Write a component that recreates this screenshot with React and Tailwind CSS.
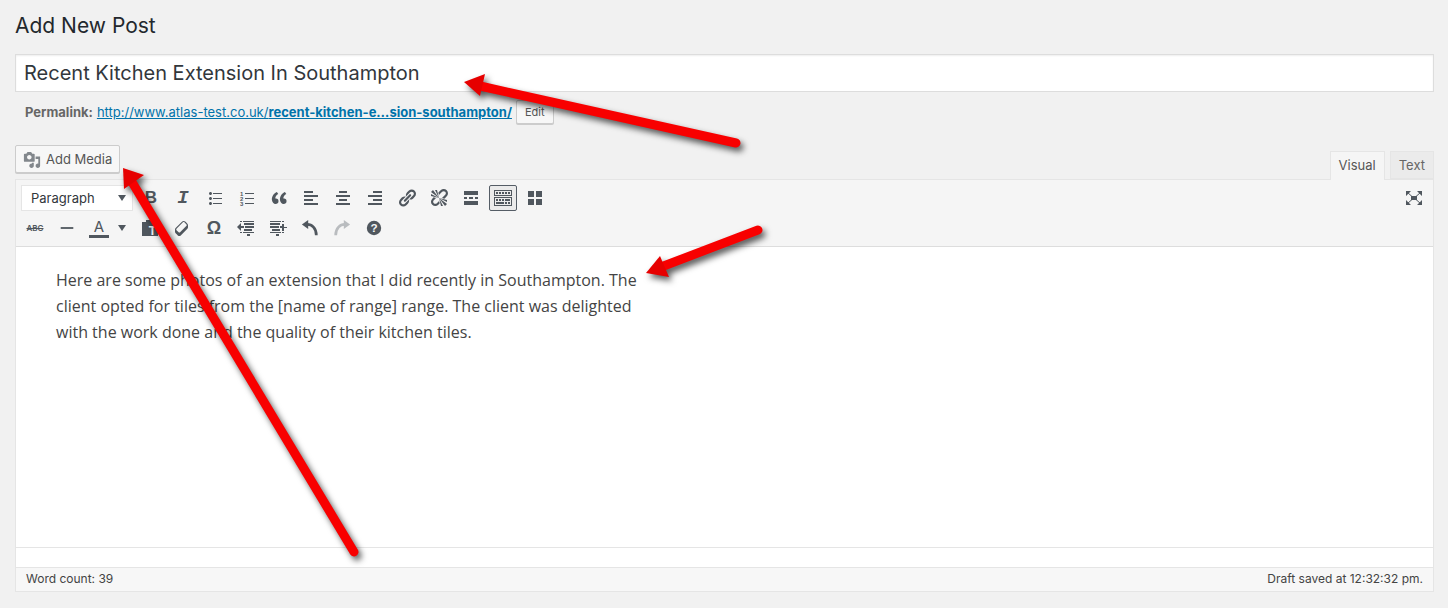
import React from "react";

const ICONS = {
  media: "M13 11V4c0-.55-.45-1-1-1h-1.67L9 1H5L3.67 3H2c-.55 0-1 .45-1 1v7c0 .55.45 1 1 1h10c.55 0 1-.45 1-1zM7 4.5c1.38 0 2.5 1.12 2.5 2.5S8.38 9.5 7 9.5 4.5 8.38 4.5 7 5.62 4.5 7 4.5zM14 6h5v10.5c0 1.38-1.12 2.5-2.5 2.5S14 17.88 14 16.5s1.12-2.5 2.5-2.5c.17 0 .34.02.5.05V9h-3V6zm-4 8.05V13h2v3.5c0 1.38-1.12 2.5-2.5 2.5S7 17.88 7 16.5 8.12 14 9.5 14c.17 0 .34.02.5.05z",
  bullets: "M5.5 7C4.67 7 4 6.33 4 5.5 4 4.68 4.67 4 5.5 4 6.32 4 7 4.68 7 5.5 7 6.33 6.32 7 5.5 7zM8 5h9v1H8V5zm-2.5 7c-.83 0-1.5-.67-1.5-1.5C4 9.68 4.67 9 5.5 9c.82 0 1.5.68 1.5 1.5 0 .83-.68 1.5-1.5 1.5zM8 10h9v1H8v-1zm-2.5 7c-.83 0-1.5-.67-1.5-1.5 0-.82.67-1.5 1.5-1.5.82 0 1.5.68 1.5 1.5 0 .83-.68 1.5-1.5 1.5zM8 15h9v1H8v-1z",
  quote: "M9.49 13.22c0-.74-.2-1.38-.61-1.9-.62-.78-1.83-.88-2.53-.72-.29-1.65 1.11-3.75 2.92-4.65L7.88 4c-2.73 1.3-5.42 4.28-4.96 8.05C3.21 14.43 4.59 16 6.54 16c.85 0 1.56-.25 2.12-.75s.83-1.18.83-2.03zm8.05 0c0-.74-.2-1.38-.61-1.9-.63-.78-1.83-.88-2.53-.72-.29-1.65 1.11-3.75 2.92-4.65L15.93 4c-2.73 1.3-5.41 4.28-4.95 8.05.29 2.38 1.66 3.95 3.61 3.95.85 0 1.56-.25 2.12-.75s.83-1.18.83-2.03z",
  left: "M12 5V3H3v2h9zm5 4V7H3v2h14zm-5 4v-2H3v2h9zm5 4v-2H3v2h14z",
  center: "M14 5V3H6v2h8zm3 4V7H3v2h14zm-3 4v-2H6v2h8zm3 4v-2H3v2h14z",
  right: "M17 5V3H8v2h9zm0 4V7H3v2h14zm0 4v-2H8v2h9zm0 4v-2H3v2h14z",
  link: "M17.74 2.76c1.68 1.69 1.68 4.41 0 6.1l-1.53 1.52c-1.12 1.12-2.7 1.47-4.14 1.09l2.62-2.61.76-.77.76-.76c.84-.84.84-2.2 0-3.04-.84-.85-2.2-.85-3.04 0l-.77.76-3.38 3.38c-.37-1.44-.02-3.02 1.1-4.14l1.52-1.53c1.69-1.68 4.42-1.68 6.1 0zM8.59 13.43l5.34-5.34c.42-.42.42-1.1 0-1.52-.44-.43-1.13-.39-1.53 0l-5.33 5.34c-.42.42-.42 1.1 0 1.52.44.43 1.13.39 1.52 0zm-.76 2.29l4.14-4.15c.38 1.44.03 3.02-1.09 4.14l-1.52 1.53c-1.69 1.68-4.41 1.68-6.1 0-1.68-1.68-1.68-4.42 0-6.1l1.53-1.52c1.12-1.12 2.7-1.47 4.14-1.1l-4.14 4.15c-.85.84-.85 2.2 0 3.05.84.84 2.2.84 3.04 0z",
  unlink: "M17.74 2.26c1.68 1.69 1.68 4.41 0 6.1l-1.53 1.52c-.32.33-.69.58-1.08.77L13 10l1.69-1.64.76-.77.76-.76c.84-.84.84-2.2 0-3.04-.84-.85-2.2-.85-3.04 0l-.77.76-.76.76L10 7l-.65-2.14c.19-.38.44-.75.77-1.07l1.52-1.53c1.69-1.68 4.42-1.68 6.1 0zM2 4l8 6-6-8zm4-2l4 8-2-8H6zM2 6l8 4-8-2V6zm7.36 7.69L10 13l.74 2.35-1.38 1.39c-1.69 1.68-4.41 1.68-6.1 0-1.68-1.68-1.68-4.42 0-6.1l1.39-1.38L7 10l-.69.64-1.52 1.53c-.85.84-.85 2.2 0 3.04.84.85 2.2.85 3.04 0zM18 16l-8-6 6 8zm-4 2l-4-8 2 8h2zm4-4l-8-4 8 2v2z",
  more: "M17 7V3H3v4h14zM6 11V9H3v2h3zm6 0V9H8v2h4zm5 0V9h-3v2h3zm0 6v-4H3v4h14z",
  toggle: "M19 2v6H1V2h18zm-1 5V3H2v4h16zM5 4v2H3V4h2zm3 0v2H6V4h2zm3 0v2H9V4h2zm3 0v2h-2V4h2zm3 0v2h-2V4h2zm2 5v9H1V9h18zm-1 8v-7H2v7h16zM5 11v2H3v-2h2zm3 0v2H6v-2h2zm3 0v2H9v-2h2zm6 0v2h-5v-2h5zm-6 3v2H3v-2h8zm3 0v2h-2v-2h2zm3 0v2h-2v-2h2z",
  grid: "M3 3h6v6H3zM11 3h6v6h-6zM3 11h6v6H3zM11 11h6v6h-6z",
  hr: "M3 9h14v2H3z",
  eraser: "M14.29 4.59l1.1 1.11c.41.4.61.94.61 1.47v2.12c0 .53-.2 1.07-.61 1.47l-6.63 6.63c-.4.41-.94.61-1.47.61s-1.07-.2-1.47-.61l-1.11-1.1-1.1-1.11c-.41-.4-.61-.94-.61-1.47v-2.12c0-.54.2-1.07.61-1.48l6.63-6.62c.4-.41.94-.61 1.47-.61s1.06.2 1.47.61zm-6.21 9.7l6.42-6.42c.39-.39.39-1.03 0-1.43L12.36 4.3c-.19-.19-.45-.29-.72-.29s-.52.1-.71.29l-6.42 6.42c-.39.4-.39 1.04 0 1.43l2.14 2.14c.38.38 1.04.38 1.43 0z",
  outdent: "M4 3h2v1H4zM7 3h11v1H7zM8 5h10v2H8zM9 8h9v2H9zM8 11h8v2H8zM4 14h2v1H4zM7 14h11v1H7zM11 16h3v2h-3zM1 9l4-4v3h3v2H5v3z",
  indent: "M2 3h11v1H2zM14 3h2v1h-2zM2 5h10v2H2zM2 8h9v2H2zM4 11h8v2H4zM2 14h11v1H2zM14 14h2v1h-2zM8 16h3v2H8zM19 9h-3V6h-2v2h-2v2h2v3h2v-3h3z",
};

function Icon({ name, size = "size-5", children }) {
  return (
    <svg viewBox="0 0 20 20" className={`${size} shrink-0 fill-current`} aria-hidden="true">
      {name && <path d={ICONS[name]} />}
      {children}
    </svg>
  );
}

function Tool({ label, children, className = "text-[#50575e]", active }) {
  return (
    <button
      type="button"
      aria-label={label}
      title={label}
      aria-pressed={active}
      className={`flex h-[26px] w-7 items-center justify-center rounded-xs ${active ? "border border-[#555d66] bg-[#ebebeb]" : ""} ${className}`}
    >
      {children}
    </button>
  );
}

function Caret() {
  return (
    <svg viewBox="0 0 8 6" className="h-[6px] w-2 fill-[#50575e]" aria-hidden="true">
      <path d="M0 0h8L4 6z" />
    </svg>
  );
}

function Curve() {
  return (
    <>
      <path d="M1 6 8 1v10z" />
      <path d="M7 6c5 0 10 4 10 12" fill="none" stroke="currentColor" strokeWidth="3" />
    </>
  );
}

function FullScreen() {
  return (
    <svg viewBox="0 0 16 14" className="h-[14px] w-4 shrink-0 fill-current" aria-hidden="true">
      <path d="M0 0h5L0 5zM16 0h-5l5 5zM0 14h5l-5-5zM16 14h-5l5-5zM5 5h6v4H5z" />
      <path d="M1 1l5 4.500M15 1l-5 4.500M1 13l5-4.500M15 13l-5-4.500" fill="none" stroke="currentColor" strokeWidth="1" />
    </svg>
  );
}

function Arrows() {
  return (
    <svg
      width="1448"
      height="608"
      viewBox="0 0 1448 608"
      aria-hidden="true"
      className="pointer-events-none absolute top-0 left-0 max-w-none fill-[#f80000] stroke-[#f80000] drop-shadow-[3px_4px_3px_rgba(0,0,0,0.65)]"
    >
      <g strokeWidth="9" strokeLinecap="round">
        <path d="M480 86 736 143" />
        <path d="M661 267 758 230" />
        <path d="M132 182 354 552" />
      </g>
      <g stroke="none" className="fill-[#e60000]">
        <path d="M464 82 485 74 480 96z" />
        <path d="M646 273 660 256 669 277z" />
        <path d="M123 168 144 175 124 189z" />
      </g>
    </svg>
  );
}

export default function App() {
  return (
    <main className="relative min-h-screen overflow-hidden bg-[#f1f1f1] pr-[14px] pb-4 pl-[15px] font-[Inter,sans-serif] text-[13px] text-[#444]">
      <h1 className="pt-[11px] text-[21px] leading-[30px] text-[#23282d]">Add New Post</h1>

      <input
        type="text"
        aria-label="Post title"
        defaultValue="Recent Kitchen Extension In Southampton"
        className="mt-[13px] block h-[38px] w-full border border-[#ddd] bg-white px-2 text-[20px] text-[#32373c] shadow-[inset_0_1px_2px_rgba(0,0,0,0.07)] outline-none"
      />

      <div className="flex h-[33px] items-center gap-1 pt-[7px] pl-[10px] text-[13px] leading-6 text-[#666]">
        <strong className="font-bold">Permalink:</strong>
        <a href="#permalink" className="text-[#0073aa] underline">
          http://www.atlas-test.co.uk/<strong className="font-bold">recent-kitchen-e…sion-southampton/</strong>
        </a>
        <button type="button" className="h-6 rounded-xs border border-[#ccc] bg-[#f7f7f7] px-2 text-[11px] leading-5 text-[#555] shadow-[0_1px_0_#ccc]">
          Edit
        </button>
      </div>

      <div className="mt-5 flex items-start justify-between">
        <button type="button" className="flex h-7 items-center gap-[5px] rounded-xs border border-[#ccc] bg-[#f7f7f7] px-[7px] pt-px text-[13px] text-[#555] shadow-[0_1px_0_#ccc]">
          <span className="flex text-[#82878c]">
            <Icon name="media" size="size-[18px]" />
          </span>
          Add Media
        </button>
        <div className="z-1 mt-1.5 -mb-px flex gap-[5px]">
          <button type="button" className="h-[29px] border border-b-0 border-[#e5e5e5] bg-[#f5f5f5] px-2 text-[13px] text-[#555]">
            Visual
          </button>
          <button type="button" className="h-7 border border-[#e5e5e5] bg-[#ebebeb] px-2 pt-px text-[13px] text-[#666]">
            Text
          </button>
        </div>
      </div>

      <section className="border border-[#e5e5e5] bg-white">
        <div className="flex items-start justify-between border-b border-[#ddd] bg-[#f5f5f5] px-[5px] py-[3px]">
          <div>
            <div className="flex h-[30px] items-center gap-1">
              <div className="relative flex w-28 items-center">
                <select aria-label="Text format" className="h-[26px] w-full appearance-none border border-[#e5e5e5] bg-white px-[9px] pt-px text-[13px] text-[#32373c]">
                  <option>Paragraph</option>
                </select>
                <span className="pointer-events-none absolute right-[7px]">
                  <Caret />
                </span>
              </div>
              <Tool label="Bold">
                <span className="font-['Liberation_Sans',sans-serif] text-[17px] leading-5 font-bold">B</span>
              </Tool>
              <Tool label="Italic">
                <span className="font-['Liberation_Mono',monospace] text-[19px] leading-5 font-bold italic">I</span>
              </Tool>
              <Tool label="Bulleted list"><Icon name="bullets" /></Tool>
              <Tool label="Numbered list">
                <Icon>
                  <path d="M8 5h9v1H8zM8 10h9v1H8zM8 15h9v1H8z" />
                  <g fontSize="6" fontFamily="Liberation Sans" fontWeight="bold">
                    <text x="3" y="7.500">1</text>
                    <text x="3" y="12.500">2</text>
                    <text x="3" y="17.500">3</text>
                  </g>
                </Icon>
              </Tool>
              <Tool label="Blockquote"><Icon name="quote" /></Tool>
              <Tool label="Align left"><Icon name="left" /></Tool>
              <Tool label="Align center"><Icon name="center" /></Tool>
              <Tool label="Align right"><Icon name="right" /></Tool>
              <Tool label="Insert link"><Icon name="link" /></Tool>
              <Tool label="Remove link"><Icon name="unlink" /></Tool>
              <Tool label="Read more"><Icon name="more" /></Tool>
              <Tool label="Toolbar toggle" active><Icon name="toggle" /></Tool>
              <Tool label="Blocks"><Icon name="grid" /></Tool>
            </div>
            <div className="flex h-[30px] items-center gap-1">
              <Tool label="Strikethrough">
                <span className="text-[8px] font-semibold line-through">ABC</span>
              </Tool>
              <Tool label="Horizontal line"><Icon name="hr" size="size-[18px]" /></Tool>
              <button type="button" aria-label="Text color" className="flex h-[26px] w-[47px] items-center gap-[9px] pl-1 text-[#50575e]">
                <span className="w-5 border-b-3 border-[#50575e] text-center text-[15px] leading-4">A</span>
                <Caret />
              </button>
              <Tool label="Paste as text">
                <Icon>
                  <path d="M2 4h4V2h6v2h4v4H8v10H2z" />
                  <path d="M8 7h10v11H8z" />
                  <text x="12.500" y="17" textAnchor="middle" fontSize="12" fontWeight="bold" fontFamily="Liberation Sans" className="fill-[#f5f5f5]">T</text>
                </Icon>
              </Tool>
              <Tool label="Clear formatting"><Icon name="eraser" /></Tool>
              <Tool label="Special character">
                <span className="font-['Liberation_Sans',sans-serif] text-[18px] leading-5 font-bold">Ω</span>
              </Tool>
              <Tool label="Decrease indent"><Icon name="outdent" /></Tool>
              <Tool label="Increase indent"><Icon name="indent" /></Tool>
              <Tool label="Undo"><Icon size="size-[18px]"><Curve /></Icon></Tool>
              <Tool label="Redo" className="text-[#b9bcbf]">
                <Icon size="size-[18px]"><g transform="translate(20 0) scale(-1 1)"><Curve /></g></Icon>
              </Tool>
              <Tool label="Help">
                <Icon size="size-[18px]">
                  <circle cx="10" cy="10" r="8" />
                  <text x="10" y="14.500" textAnchor="middle" fontSize="13" fontWeight="bold" fontFamily="Liberation Sans" className="fill-[#f5f5f5]">?</text>
                </Icon>
              </Tool>
            </div>
          </div>
          <div className="flex h-[30px] items-center">
            <Tool label="Full screen"><FullScreen /></Tool>
          </div>
        </div>

        <textarea
          aria-label="Post content"
          className="block h-[300px] w-full max-w-[664px] resize-none bg-white px-10 pt-5 font-['Open_Sans',sans-serif] text-[16px] leading-[26px] text-[#444] outline-none"
          defaultValue="Here are some photos of an extension that I did recently in Southampton. The client opted for tiles from the [name of range] range. The client was delighted with the work done and the quality of their kitchen tiles."
        />
        <div className="h-5 border-t border-[#e5e5e5]" />
        <div className="flex h-6 items-center justify-between border-t border-[#e5e5e5] bg-[#f7f7f7] px-[10px] pb-0.5 text-[12px] text-[#444]">
          <span>Word count: 39</span>
          <span>Draft saved at 12:32:32 pm.</span>
        </div>
      </section>
      <Arrows />
    </main>
  );
}
